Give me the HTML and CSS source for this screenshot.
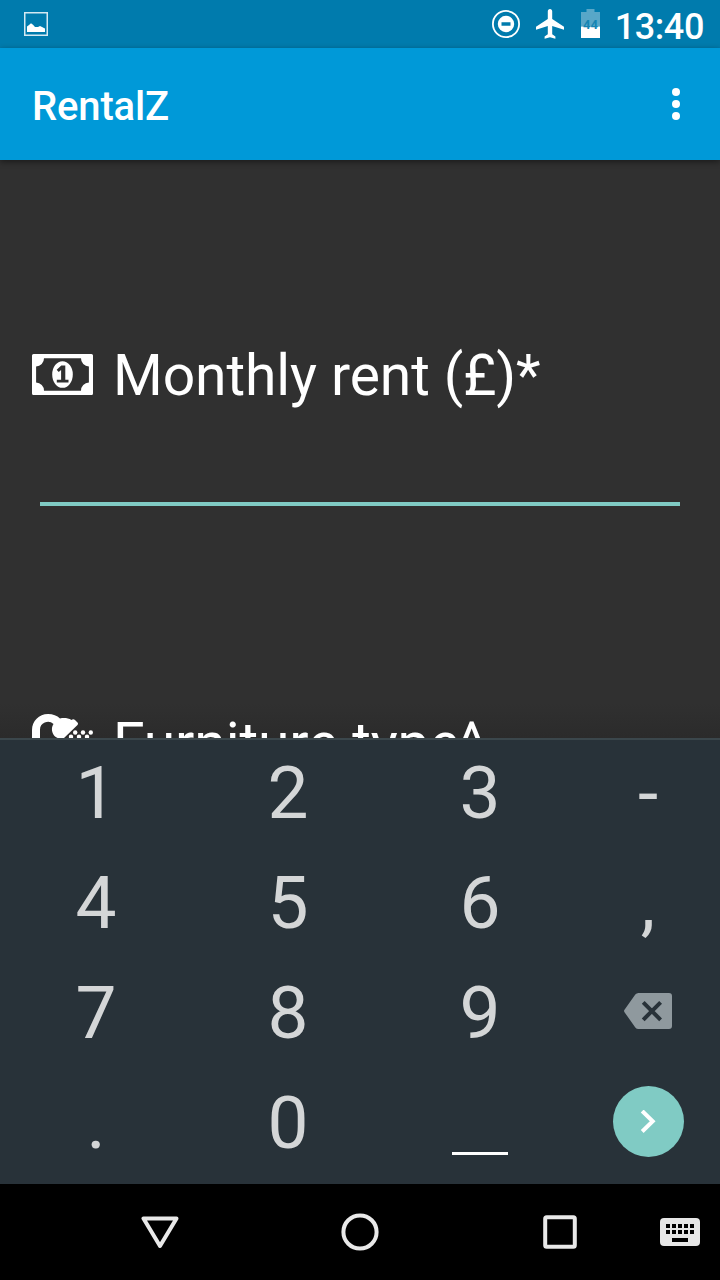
FILE: index.html
```html
<!DOCTYPE html>
<html lang="en">
<head>
<meta charset="utf-8">
<title>RentalZ</title>
<link rel="stylesheet" href="styles.css">
</head>
<body>
<div class="screen">
  <header class="status">
    <svg class="status-image" width="24" height="24" viewBox="0 0 24 24"><rect x=".75" y=".75" width="22.5" height="22.5" fill="none" stroke="#d4e9f2" stroke-width="1.5"/><path d="M3 20v-5.500l2-1.500 2-1.800 2 1.500 2 2.300h3l2-1 2 1 3 1.500v3.500z" fill="#fff"/></svg>
    <div class="status-right">
      <svg width="28" height="28" viewBox="0 0 28 28"><circle cx="14" cy="14" r="13.100" fill="none" stroke="#fff" stroke-width="1.800"/><path fill="#fff" fill-rule="evenodd" d="M14 5.800a8.200 8.200 0 1 0 0 16.400a8.200 8.200 0 1 0 0-16.400zM9.500 12.300h9v3.400h-9z"/></svg>
      <svg class="plane" width="28" height="30" viewBox="0 0 28 30"><path fill="#fff" d="M14 0c1.400 0 2.200 1 2.200 2.300V10L28 17.700v3L16.200 17v8.200l3.200 2.400v2.200L14 28.300l-5.400 1.500v-2.200l3.200-2.400V17L0 20.700v-3L11.800 10V2.300C11.800 1 12.600 0 14 0z"/></svg>
      <svg class="battery" width="20" height="30" viewBox="0 0 20 30"><path fill="#58a7c8" d="M5.500 0h8v3H19v14.500H0V3h5.500z"/><path fill="#fff" d="M0 17.500h19V29H0z"/><text class="battery-level" x="9.500" y="19.500" text-anchor="middle">44</text></svg>
      <span class="time">13:40</span>
    </div>
  </header>
  <div class="appbar">
    <h1 class="title">RentalZ</h1>
    <svg width="8" height="32" viewBox="0 0 8 32" fill="#fff"><circle cx="4" cy="4" r="4"/><circle cx="4" cy="16" r="4"/><circle cx="4" cy="28" r="4"/></svg>
  </div>
  <main class="form">
    <label class="field rent">
      <svg class="field-icon" width="61" height="41" viewBox="0 0 61 41"><path fill="#fff" fill-rule="evenodd" d="M1.500 0h58q1.500 0 1.500 1.500v38q0 1.500-1.500 1.500h-58Q0 41 0 39.500v-38Q0 0 1.500 0zM12 4.300A8 8 0 0 1 4.100 12.500v16A8 8 0 0 1 12 36.700h37a8 8 0 0 1 7.900-8.200v-16A8 8 0 0 1 49 4.300z"/><ellipse cx="30.500" cy="20.500" rx="10.300" ry="13.300" fill="#fff"/><path fill="#303030" d="M29.300 11.500h4v14.300h3.200v2.800H24.800v-2.800h4.300V16l-2.400 1.900-2-2.200z"/></svg>
      <span>Monthly rent (£)*</span>
    </label>
    <div class="input"></div>
    <label class="field next">
      <svg class="field-icon" width="61" height="60" viewBox="0 0 61 60" fill="#fff"><path d="M0 60V16C0 7 7 0 16 0c5 0 9 1.500 12 4.500 4-1 8-.5 11.500 1.500 1-1 2.500-1 3.500 0l2.500 2.500q1 1.200 0 2.400L31 25C20 25 18 15 21.500 10A8 8 0 0 0 8 16v44z"/><g><circle cx="43.200" cy="18.500" r="2.200"/><circle cx="51" cy="18.500" r="2.200"/><circle cx="58.800" cy="18.500" r="2.200"/><circle cx="39" cy="22.700" r="2.200"/><circle cx="47" cy="22.700" r="2.200"/><circle cx="55" cy="22.700" r="2.200"/></g></svg>
      <span>Furniture type^</span>
    </label>
  </main>
  <div class="keypad">
    <span>1</span><span>2</span><span>3</span><span>-</span>
    <span>4</span><span>5</span><span>6</span><span>,</span>
    <span>7</span><span>8</span><span>9</span>
    <span class="icon-key delete"><svg width="48" height="36" viewBox="0 0 48 36"><path fill="#8f999e" d="M14.500 0H45q3 0 3 3v30q0 3-3 3H14.500q-2 0-3.200-1.600L.5 19.200q-.9-1.200 0-2.400L11.300 1.600Q12.500 0 14.500 0z"/><path d="m19.200 9.400 17.400 17.400m0-17.400L19.200 26.800" stroke="#283239" stroke-width="4"/></svg></span>
    <span>.</span><span>0</span>
    <span class="icon-key"><i class="space"></i></span>
    <span class="icon-key"><i class="enter"><svg width="16" height="24" viewBox="0 0 16 24"><path d="m2.200 1 10.500 10.300L2.200 21.500" fill="none" stroke="#fff" stroke-width="4"/></svg></i></span>
  </div>
  <nav class="navbar">
    <svg class="back" width="38" height="33" viewBox="0 0 38 33"><path d="M2.500 2.500h33L19 30z" fill="none" stroke="#e9e9e9" stroke-width="4" stroke-linejoin="round"/></svg>
    <svg class="home" width="38" height="38" viewBox="0 0 38 38"><circle cx="19" cy="19" r="16.600" fill="none" stroke="#e9e9e9" stroke-width="4"/></svg>
    <svg class="recent" width="34" height="34" viewBox="0 0 34 34"><rect x="2.200" y="2.200" width="29.600" height="29.600" rx="1.500" fill="none" stroke="#e9e9e9" stroke-width="4"/></svg>
    <svg class="ime" width="40" height="28" viewBox="0 0 40 28"><rect width="40" height="28" rx="4" fill="#e6e6e6"/><path d="M6 8h28M6 14h28" stroke="#000" stroke-width="4" stroke-dasharray="4 2"/><path d="M12 22h16" stroke="#000" stroke-width="4"/></svg>
  </nav>
</div>
</body>
</html>
```
FILE: styles.css
```css
* { box-sizing: border-box; }
body { margin: 0; font-family: Roboto, "Noto Sans", sans-serif; color: #fff; }
svg { display: block; flex: none; }
.screen { width: 720px; height: 1280px; overflow: hidden; display: flex; flex-direction: column; background: #303030; }
.status { flex: none; height: 48px; padding: 0 16px 0 24px; background: #007bad; display: flex; align-items: center; justify-content: space-between; }
.status-right { display: flex; align-items: center; }
.plane { margin: 0 17px 0 16px; }
.battery { margin-right: 14px; }
.battery-level { font-size: 13px; font-weight: 700; fill: #1585b3; }
.time { font-size: 36px; font-weight: 500; line-height: 42px; padding-top: 5px; letter-spacing: -.4px; }
.appbar { flex: none; height: 112px; padding: 0 40px 0 32px; background: #0099d8; display: flex; align-items: center; justify-content: space-between; z-index: 1; box-shadow: 0 2px 6px rgba(0,0,0,.45); }
.title { margin: 0; padding-top: 6px; font-size: 40px; font-weight: 500; line-height: 48px; letter-spacing: -.15px; }
.form { flex: none; height: 578px; padding: 180px 32px 0; overflow: hidden; background: linear-gradient(#303030 94%, #2b2b2b); }
.field { display: flex; align-items: center; gap: 20px; height: 70px; font-size: 57px; line-height: 70px; letter-spacing: -.1px; white-space: nowrap; }
.rent span { padding-top: 2px; }
.field-icon { margin-top: -2px; }
.input { height: 4px; margin: 92px 8px 0; background: #80cbc4; }
.next { margin-top: 203px; align-items: flex-start; }
.next .field-icon { margin-top: 5px; }
.keypad { flex: none; height: 446px; background: #283239; border-top: 2px solid #3b474c; display: grid; grid-template-columns: 192px 192px 192px 144px; grid-template-rows: repeat(4, 110px); color: #d4d6d7; font-size: 73px; line-height: 106px; text-align: center; }
.icon-key { display: flex; align-items: center; justify-content: center; }
.delete { padding-bottom: 8px; }
.space { width: 56px; height: 3px; margin-top: 56px; background: #fff; }
.enter { width: 71px; height: 71px; margin-bottom: 7px; border-radius: 50%; background: #80cbc4; display: flex; align-items: center; justify-content: center; }
.navbar { flex: none; height: 96px; padding: 0 20px 0 141px; background: #000; display: flex; align-items: center; }
.home { margin-left: 162px; }
.recent { margin-left: 164px; }
.ime { margin-left: auto; }
```
